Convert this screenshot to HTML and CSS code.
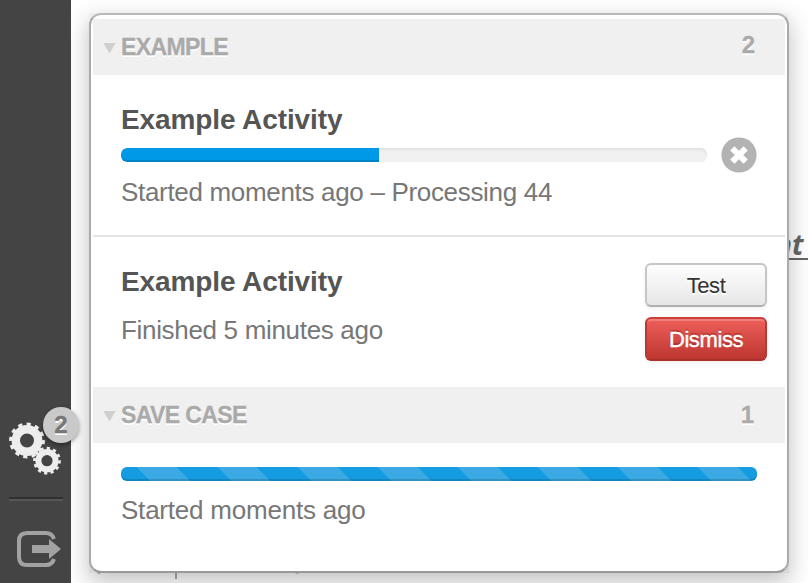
FILE: index.html
```html
<!DOCTYPE html>
<html lang="en">
<head>
<meta charset="utf-8">
<title>Activities</title>
<link rel="stylesheet" href="styles.css">
</head>
<body>
<div class="app">
  <aside class="sidebar">
    <button class="nav-item activities" aria-label="Activities">
      <svg class="gears" width="54" height="56" viewBox="0 0 54 56" fill="none" stroke="#ededed">
        <circle cx="19" cy="20.5" r="11.2" stroke-width="8.4"/>
        <circle cx="19" cy="20.5" r="16.3" stroke-width="3.2" pathLength="24" stroke-dasharray="1 1" stroke-dashoffset=".1"/>
        <circle cx="39" cy="40.7" r="8.6" stroke-width="6"/>
        <circle cx="39" cy="40.7" r="12.5" stroke-width="2.800" pathLength="24" stroke-dasharray="1 1" stroke-dashoffset=".1"/>
      </svg>
      <span class="badge">2</span>
    </button>
    <div class="divider"></div>
    <button class="nav-item" aria-label="Sign out">
      <svg class="exit" width="46" height="38" viewBox="0 0 46 38">
        <path d="M38 8Q36 2 30 2H11Q3 2 3 10v16q0 8 8 8h19q6 0 8-6" fill="none" stroke="#a2a2a2" stroke-width="4"/>
        <path d="M32 5V31L46 18z" fill="#444"/>
        <path d="M16 14h17V8L45 18 33 28v-6H16z" fill="#a2a2a2"/>
      </svg>
    </button>
  </aside>
  <main class="content">
    <span class="page-link">nt&nbsp;</span>
    <i class="rule"></i><i class="dot first"></i><i class="dot second"></i>
    <div class="popover">
      <section class="panel">
        <header class="group"><i class="arrow"></i><h2>EXAMPLE</h2><span class="count">2</span></header>
        <article class="activity running">
          <h3>Example Activity</h3>
          <div class="progress-row">
            <div class="track"><div class="bar" style="width:258px"></div></div>
            <button class="cancel" aria-label="Cancel">
              <svg width="36" height="36" viewBox="0 0 36 36"><circle cx="18" cy="18" r="17.6" fill="#b3b3b3"/><path d="M11.300 11.300 24.700 24.700M24.700 11.300 11.300 24.700" stroke="#fff" stroke-width="6"/></svg>
            </button>
          </div>
          <p class="s1">Started moments ago – Processing 44</p>
        </article>
        <article class="activity finished">
          <div class="info"><h3>Example Activity</h3><p class="s2">Finished 5 minutes ago</p></div>
          <div class="actions"><button class="btn">Test</button><button class="btn danger">Dismiss</button></div>
        </article>
        <header class="group"><i class="arrow"></i><h2>SAVE CASE</h2><span class="count one">1</span></header>
        <article class="activity saving">
          <div class="bar striped"></div>
          <p class="s3">Started moments ago</p>
        </article>
      </section>
    </div>
  </main>
</div>
</body>
</html>
```

FILE: styles.css
```css
* { box-sizing: border-box; }
body { margin: 0; overflow: hidden; background: #fff; font-family: "Liberation Sans", Arial, sans-serif; }
h2, h3, p { margin: 0; white-space: nowrap; }
button { margin: 0; padding: 0; border: 0; background: none; font-family: inherit; }
svg { display: block; }
.app { display: flex; width: 808px; height: 583px; overflow: hidden; }
.sidebar { z-index: 2; display: flex; flex-direction: column; justify-content: flex-end; width: 71px; padding: 0 8px 14px; background: #444; }
.nav-item { position: relative; align-self: flex-start; }
.exit { margin-left: 8px; }
.badge { position: absolute; left: 35px; top: -13px; width: 36px; height: 36px; border-radius: 50%; background: #c9c9c9; color: #777; font-size: 24px; font-weight: bold; line-height: 36px; text-align: center; text-shadow: 0 2px 0 #fff; -webkit-text-stroke: .4px #777; box-shadow: 0 2px 4px rgba(0,0,0,.4); }
.divider { width: 54px; height: 4px; margin: 21px 0 30px 1px; border-top: 2px solid #303030; border-bottom: 2px solid #565656; }
.content { position: relative; flex: 1; padding: 13px 19px 10px 18px; }
.page-link { position: absolute; left: 704px; top: 229px; color: #666; font: italic bold 28px/30px "Open Sans", sans-serif; text-decoration: underline; text-decoration-thickness: 2px; text-underline-offset: 3px; }
.rule { position: absolute; left: 104px; top: 573px; width: 2px; height: 6px; background: #aaa; }
.dot { position: absolute; z-index: 1; top: 572px; width: 4px; height: 2px; border-radius: 0 0 2px 2px; background: #999; }
.first { left: 26px; }
.second { left: 224px; }
.popover { position: relative; width: 700px; height: 560px; background: linear-gradient(#eee, #d8d8d8); box-shadow: 0 8px 22px rgba(0,0,0,.26); }
.panel { height: 560px; padding: 4px 2px; border: 2px solid #aaa; border-top-color: #b8b8b8; border-bottom-color: #999; border-radius: 12px; background: #fff; }
.group { display: flex; align-items: center; height: 56px; padding: 0 30px 0 10px; background: #f0f0f0; color: #aaa; text-shadow: 0 2px 0 #fff; }
.arrow { width: 13px; height: 11px; margin: 2px 5px 0 0; background: #d0d0d0; clip-path: polygon(0 0, 100% 0, 50% 100%); }
.group h2 { flex: 1; font-size: 23px; line-height: 28px; letter-spacing: -.6px; -webkit-text-stroke: .3px #aaa; }
.count { font-size: 24px; font-weight: bold; line-height: 28px; margin-top: -4px; -webkit-text-stroke: .3px #aaa; }
.one { margin-top: 0; margin-right: 1px; }
.activity { padding: 0 28px; color: #777; }
.activity h3 { color: #555; font-size: 28px; line-height: 32px; letter-spacing: -.1px; }
.activity p { font-size: 26px; line-height: 30px; }
.activity .s1, .activity .s2 { letter-spacing: -.32px; }
.activity .s3 { letter-spacing: -.22px; }
.running { height: 162px; padding-top: 29px; border-bottom: 2px solid #e5e5e5; }
.progress-row { display: flex; align-items: center; gap: 14px; height: 36px; margin-top: 1px; }
.track { width: 586px; height: 14px; overflow: hidden; border-radius: 6px; background: #f1f1f1; box-shadow: inset 0 2px 3px rgba(0,0,0,.07); }
.bar { height: 14px; border-radius: 6px 0 0 6px; background: #0099e8; box-shadow: inset 0 -2px 0 rgba(0,0,0,.14); }
.running p { margin-top: 4px; }
.finished { display: flex; justify-content: space-between; height: 150px; padding: 26px 18px 0 28px; }
.info { padding-top: 3px; }
.info p { margin-top: 17px; }
.actions { display: flex; flex-direction: column; gap: 10px; }
.btn { width: 122px; height: 44px; border: 2px solid #c6c6c6; border-bottom-color: #b0b0b0; border-radius: 6px; background: linear-gradient(#fff, #e5e5e5); background-origin: border-box; color: #333; font-size: 22px; line-height: 38px; padding-top: 1px; letter-spacing: -.4px; text-shadow: 0 2px 0 #fff; box-shadow: 0 2px 4px rgba(0,0,0,.06); }
.danger { border-color: #c9413d #b93834 #ae302c; background: linear-gradient(#ee5f5b, #bd362f); color: #fff; -webkit-text-stroke: .4px #fff; text-shadow: 0 -2px 1px rgba(90,0,0,.3); box-shadow: inset 0 2px 0 rgba(255,255,255,.2), 0 2px 4px rgba(0,0,0,.06); }
.saving { height: 124px; padding-top: 24px; }
.striped { width: 636px; border-radius: 6px; background: repeating-linear-gradient(45deg, #149be0 0 21.213px, #3aa9e4 21.213px 49.497px, #149be0 49.497px 56.569px); }
.saving p { margin-top: 14px; }
```
